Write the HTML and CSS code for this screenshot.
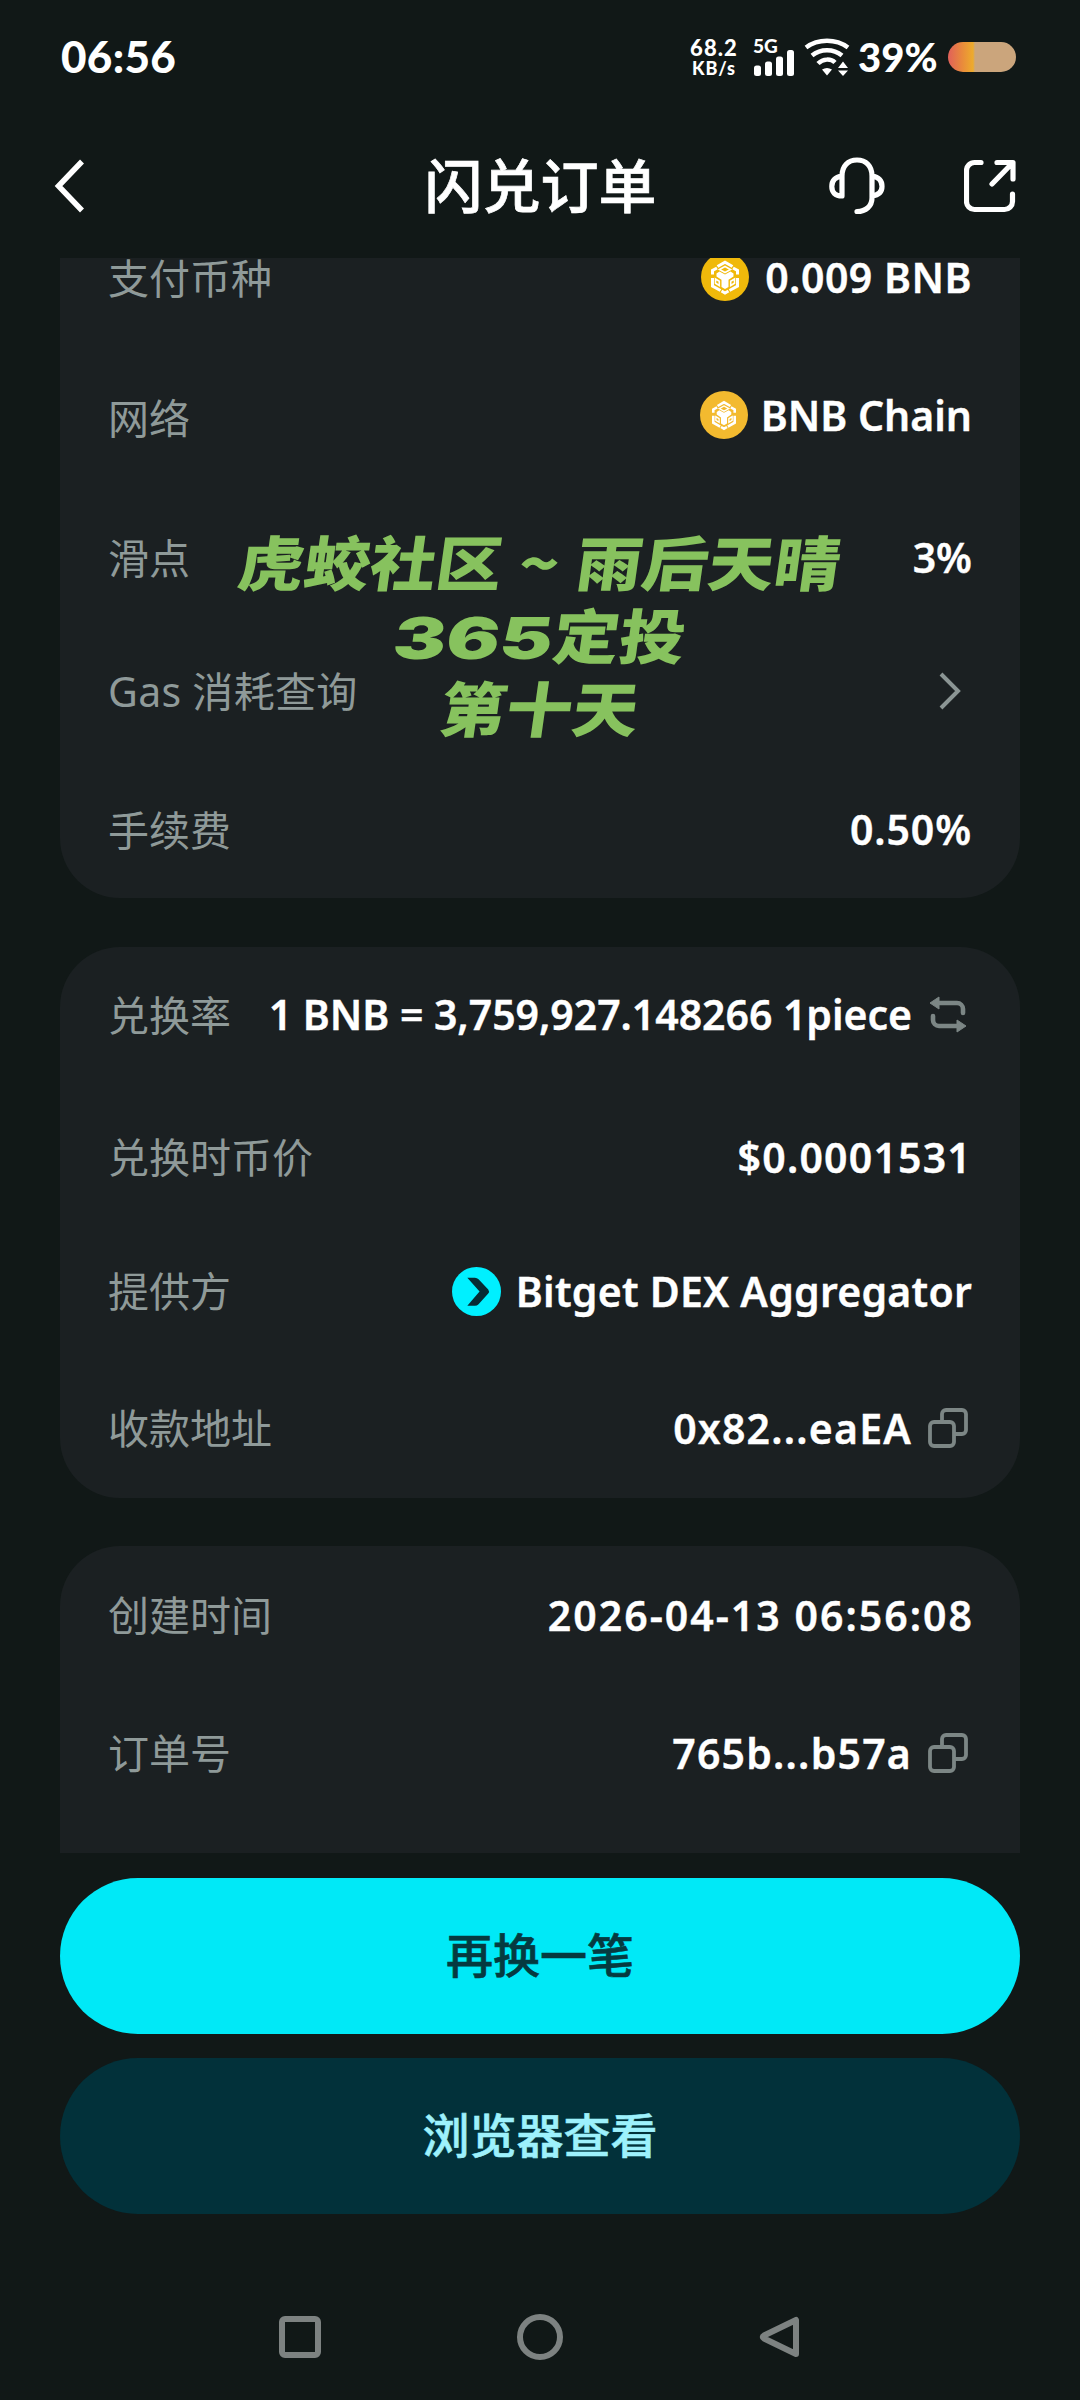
FILE: index.html
```html
<!DOCTYPE html>
<html lang="zh-CN">
<head>
<meta charset="utf-8">
<title>闪兑订单</title>
<link rel="stylesheet" href="styles.css">
</head>
<body>
<svg width="0" height="0" class="defs">
  <symbol id="bnb" viewBox="0 0 48 48">
    <g fill="none" stroke="#fff" stroke-width="3">
      <path d="M16.500 13.500 24 9.200 31.500 13.500M11.500 21.500V17.500L16 15M36.500 21.500V17.500L32 15M11.500 25V33L19.500 37.500M36.500 25V33L28.500 37.500M20.500 38 24 40 27.500 38"/>
      <path stroke-width="1.600" d="M18.500 16.500 24 13.500 29.500 16.500 24 19.500ZM14.500 26 18.300 28.200V32.500L14.500 30.300ZM33.500 26 29.700 28.200V32.500L33.500 30.300Z"/>
    </g>
    <path fill="#fff" d="M15.500 20.500 18.500 18.500 24 21.500 29.500 18.500 32.500 20.500V23.500L27.500 26.800V34L24 36 20.500 34V26.800L15.500 23.500Z"/>
  </symbol>
  <symbol id="copy" viewBox="0 0 40 40">
    <g fill="none" stroke="#7c8685" stroke-width="3.800">
      <rect x="2" y="14" width="24" height="24" rx="4"/>
      <path d="M14 14V6a4 4 0 0 1 4-4h16a4 4 0 0 1 4 4v16a4 4 0 0 1-4 4h-8"/>
    </g>
  </symbol>
</svg>
<div class="screen">
  <div class="status">
    <span class="time">06:56</span>
    <div class="net"><span>68.2</span><span class="unit">KB/s</span></div>
    <div class="signal"><span>5G</span>
      <svg width="42" height="26" viewBox="0 0 42 26" fill="#fff"><rect x="1" y="15.500" width="7" height="10.500" rx="2.500"/><rect x="12" y="11.500" width="7" height="14.500" rx="2.500"/><rect x="23" y="6.500" width="7" height="19.500" rx="2.500"/><rect x="34" y="0" width="7" height="26" rx="2.500"/></svg>
    </div>
    <svg class="wifi" width="46" height="38" viewBox="0 0 46 38"><g fill="none" stroke="#fff" stroke-width="4.500"><path d="M2 9.500C14 .500 32 .500 44 9.500M8 17.500C16.500 10.500 29.500 10.500 38 17.500M14 25.500C19 20.500 27 20.500 31 24.500"/></g><path fill="#fff" d="M18 31.500q5-3 10 0l-5 6ZM34 30l5-6.500 5 6.500ZM34 32.500h10l-5 5.500Z"/></svg>
    <span class="pct">39%</span>
    <span class="battery"></span>
  </div>
  <header class="header">
    <svg class="back" width="32" height="56" viewBox="0 0 32 56" fill="none" stroke="#fff" stroke-width="5.500"><path d="M28 3.500 4.500 28 28 52.500"/></svg>
    <h1>闪兑订单</h1>
    <svg class="headset" width="56" height="58" viewBox="0 0 56 58" fill="none" stroke="#fff" stroke-width="5.200" stroke-linecap="round" stroke-linejoin="round"><path d="M13 39V19C13 9 19 3 28 3S43 9 43 19V41C43 49 37 54.500 28 54.500M13 19C6 20 2.800 24 2.800 29.500S6 39 13 39M43 19c7 1 10 5 10 10.500S50 38 43 39"/></svg>
    <svg class="share" width="52" height="54" viewBox="0 0 52 54" fill="none" stroke="#fff" stroke-width="5.200" stroke-linecap="round" stroke-linejoin="round"><path d="M17 3.500H10.500a8 8 0 0 0-8 8v31a8 8 0 0 0 8 8h30a8 8 0 0 0 8-8V35M33 3.500H49V20M48 4.500 28 25"/></svg>
  </header>
  <main class="list">
    <section class="card first">
      <div class="row"><span class="label">支付币种</span><span class="value raised"><svg class="coin gold" width="48" height="48"><use href="#bnb"/></svg><b class="amount">0.009 BNB</b></span></div>
      <div class="row"><span class="label">网络</span><span class="value chain"><svg class="coin" width="48" height="48" viewBox="-4 -4 56 56"><use href="#bnb" width="48" height="48"/></svg><b>BNB Chain</b></span></div>
      <div class="row"><span class="label">滑点</span><span class="value raised"><b>3%</b></span></div>
      <div class="row"><span class="label gas">Gas 消耗查询</span><span class="value"><svg class="chev" width="24" height="40" viewBox="0 0 24 40" fill="none" stroke="#8b9594" stroke-width="4"><path d="M3 3 20 20 3 37"/></svg></span></div>
      <div class="row"><span class="label">手续费</span><span class="value raised"><b class="fee">0.50%</b></span></div>
      <div class="note"><p><span>虎蛟社区</span><i>~</i><span>雨后天晴</span></p><p><em>365</em>定投</p><p>第十天</p></div>
    </section>
    <section class="card second">
      <div class="row"><span class="label">兑换率</span><span class="value icon raised"><b class="rate">1 BNB = 3,759,927.148266 1piece</b><svg width="40" height="40" viewBox="0 0 40 40"><path fill="none" stroke="#7c8685" stroke-width="4.600" stroke-linecap="round" d="M9 9H29a6 6 0 0 1 6 6v4M5 22v4a6 6 0 0 0 6 6H31"/><path fill="#7c8685" stroke="#7c8685" stroke-linejoin="round" d="M2 9 11 3V15ZM38 32 29 26V38Z"/></svg></span></div>
      <div class="row"><span class="label">兑换时币价</span><span class="value"><b class="short">$0.0001531</b></span></div>
      <div class="row"><span class="label">提供方</span><span class="value provider"><svg width="49" height="49" viewBox="0 0 48 48"><circle cx="24" cy="24" r="24" fill="#00f0ff"/><path fill="#062b33" d="M15 10.500H22.500Q24.500 10.500 26 12L35.500 22Q37 24 35.500 26L26 36.500Q24.500 38 22.500 38H15L27 24Z"/></svg><b class="bitget">Bitget DEX Aggregator</b></span></div>
      <div class="row"><span class="label">收款地址</span><span class="value icon"><b class="short">0x82...eaEA</b><svg width="40" height="40"><use href="#copy"/></svg></span></div>
    </section>
    <section class="card third">
      <div class="row"><span class="label">创建时间</span><span class="value"><b class="date">2026-04-13 06:56:08</b></span></div>
      <div class="row"><span class="label">订单号</span><span class="value icon"><b class="short">765b...b57a</b><svg width="40" height="40"><use href="#copy"/></svg></span></div>
    </section>
  </main>
  <div class="actions">
    <button class="btn primary">再换一笔</button>
    <button class="btn secondary">浏览器查看</button>
  </div>
  <nav class="nav">
    <svg width="48" height="48" viewBox="0 0 48 48"><rect x="6" y="6" width="36" height="36" rx="3"/></svg>
    <svg width="48" height="48" viewBox="0 0 48 48"><circle cx="24" cy="24" r="20"/></svg>
    <svg width="48" height="48" viewBox="0 0 48 48"><path d="M40 7V41L8 25.500Q5.500 24 8 22.500Z"/></svg>
  </nav>
</div>
</body>
</html>
```
FILE: styles.css
```css
* { box-sizing: border-box; }
body { margin: 0; background: #111817; color: #fff; font-family: "Noto Sans", "Noto Sans CJK SC", sans-serif; }
.defs { display: block; }
.screen { width: 1080px; height: 2400px; overflow: hidden; display: flex; flex-direction: column; }
svg { display: block; flex: none; }

.status { height: 116px; padding: 0 64px 2px 61px; display: flex; align-items: center; font-family: Lato, sans-serif; font-weight: 900; }
.time { font-size: 44px; letter-spacing: .3px; margin-right: auto; line-height: 58px; padding-bottom: 2px; }
.net { width: 50px; display: flex; flex-direction: column; align-items: center; font-size: 22px; line-height: 22px; letter-spacing: 1.1px; margin-right: 14px; }
.unit { font-size: 18px; line-height: 18px; letter-spacing: 1px; }
.signal { width: 42px; height: 38px; margin-right: 9px; display: grid; }
.signal span { grid-area: 1 / 1; font-size: 19px; line-height: 16px; }
.signal svg { grid-area: 1 / 1; align-self: end; }
.wifi { margin-right: 8px; }
.pct { font-size: 40px; width: 80px; white-space: nowrap; margin-right: 10px; }
.battery { width: 68px; height: 30px; border-radius: 15px; background: linear-gradient(90deg, #e0605a 0, #e98a3c 14px, #edab2c 25px, #cba57c 27px); }

.header { height: 142px; padding: 0 64px 2px 54px; display: grid; grid-template-columns: 198px 1fr 56px 52px; align-items: center; column-gap: 79px; }
.header h1 { margin: -6px 0 0; font: 500 58px/80px "Noto Sans CJK SC", sans-serif; text-align: center; white-space: nowrap; -webkit-text-stroke: .7px #fff; }

.list { height: 1595px; overflow: hidden; padding: 0 60px; }
.card { background: #1b2022; border-radius: 60px; padding: 0 48px 0 48px; margin-bottom: 48px; position: relative; display: grid; }
.first { border-radius: 0 0 60px 60px; height: 640px; margin-bottom: 49px; grid-template-rows: 40px 240px 40px 226px 52px; align-items: center; }
.second { height: 551px; grid-template-rows: 137px 146px 122px 152px; align-items: center; }
.third { height: 400px; grid-template-rows: 138px 138px; align-items: center; border-radius: 60px 60px 0 0; }
.row { display: flex; justify-content: space-between; align-items: center; height: 60px; }
.label { font-size: 41px; line-height: 60px; color: #8f9a99; white-space: nowrap; margin-top: -1px; }
.gas { letter-spacing: .3px; }
.value { display: flex; align-items: center; gap: 16px; font-size: 41px; line-height: 60px; white-space: nowrap; }
.value b { font-weight: 600; -webkit-text-stroke: .4px #fff; }
.value.icon { gap: 16px; margin-right: 4px; }
.raised { margin-top: -3px; }
.chain { gap: 13px; margin-top: -7px; }
.provider { gap: 15px; }
.amount { letter-spacing: .5px; }
.fee { letter-spacing: .9px; }
.rate { letter-spacing: -.04px; }
.short { letter-spacing: 1.2px; }
.date { letter-spacing: 2.02px; margin-right: -2px; }
.bitget { letter-spacing: .24px; }
.coin { border-radius: 50%; background: #f3ba2f; }
.gold { background: #f0b90b; }
.chev { margin-right: 10px; }

.note { position: absolute; left: 0; right: 0; top: 266px; color: #87c25e; font: 900 66px/73px "Noto Sans CJK SC", sans-serif; text-align: center; }
.note p { margin: 0; white-space: nowrap; transform: skewX(-8deg) scaleY(.9); }
.note i { display: inline-block; width: 74px; font-style: normal; }
.note em { display: inline-block; font: 900 64px/60px Inter, sans-serif; width: 160px; transform: scaleX(1.24); }

.actions { padding: 25px 60px 0; display: flex; flex-direction: column; gap: 24px; }
.btn { height: 156px; border: 0; border-radius: 78px; padding: 0 0 7px; font: 500 47px/60px "Noto Sans CJK SC", sans-serif; -webkit-text-stroke: .6px currentColor; }
.primary { background: #00e9f7; color: #053a40; }
.secondary { background: #02313a; color: #9df1fc; }
.nav { margin-top: 99px; padding: 0 276px; display: flex; justify-content: space-between; }
.nav svg { fill: none; stroke: #7d8281; stroke-width: 6; stroke-linejoin: round; }
```
